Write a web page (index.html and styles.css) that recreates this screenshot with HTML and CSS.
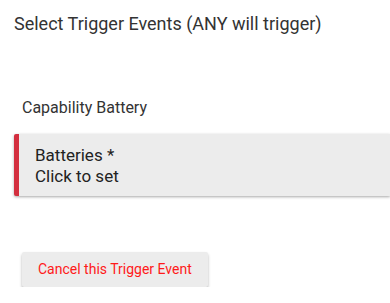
FILE: index.html
```html
<!DOCTYPE html>
<html>
<head>
<meta charset="utf-8">
<link rel="stylesheet" href="styles.css">
</head>
<body>
<div class="page">
  <h2 class="title">Select Trigger Events (ANY will trigger)</h2>
  <div class="section">
    <div class="cap-label">Capability Battery</div>
    <div class="field">
      <div class="field-name">Batteries *</div>
      <div class="field-value">Click to set</div>
    </div>
  </div>
  <div class="actions">
    <button class="cancel-btn">Cancel this Trigger Event</button>
  </div>
</div>
</body>
</html>
```
FILE: styles.css
```css
html, body {
  margin: 0;
  padding: 0;
  background: #ffffff;
  overflow: hidden;
}
body {
  font-family: Roboto, "Liberation Sans", sans-serif;
  color: #333333;
}
.page {
  padding: 12px 0 0 14px;
}
.title {
  margin: 0;
  font-size: 18px;
  font-weight: 400;
  line-height: 24px;
  color: #333333;
}
.section {
  margin-top: 61.5px;
}
.cap-label {
  margin-left: 8px;
  font-size: 16px;
  line-height: 20px;
  color: #333333;
}
.field {
  margin-top: 16.5px;
  background: #ececec;
  border-left: 5px solid #d32f3f;
  border-radius: 2px 0 0 2px;
  padding: 10.7px 16px 9.3px 16px;
  box-shadow: 0 1px 3px rgba(0, 0, 0, 0.35);
  font-size: 17px;
  line-height: 21px;
  color: #222222;
}
.actions {
  margin-top: 56px;
  padding-left: 8px;
}
.cancel-btn {
  font-family: Roboto, "Liberation Sans", sans-serif;
  font-size: 14px;
  line-height: 20px;
  color: #ff1a1a;
  background: #ececec;
  border: none;
  border-radius: 2px;
  padding: 7.5px 16px 7.5px 16px;
  box-shadow: 0 2px 3px rgba(0, 0, 0, 0.3);
  cursor: pointer;
}
```
